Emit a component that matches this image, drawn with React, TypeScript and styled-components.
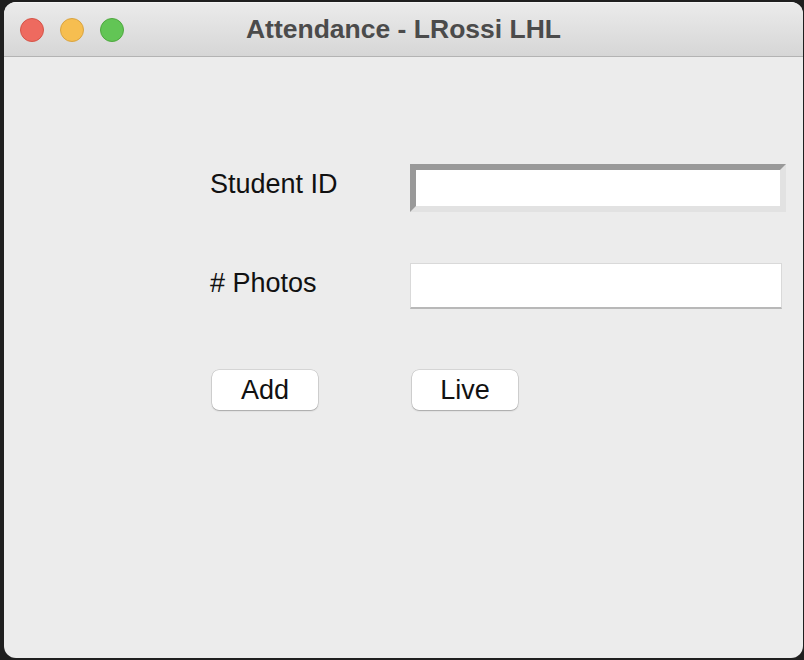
import React from "react";
import styled, { createGlobalStyle } from "styled-components";

const Global = createGlobalStyle`
  html, body {
    margin: 0;
    padding: 0;
    background: #1f1f1f;
    height: 660px;
    overflow: hidden;
  }
  #root {
    padding: 2px 1px 0 4px;
  }
`;

const Window = styled.div`
  width: 799px;
  height: 656px;
  border-radius: 12px;
  background: #ececec;
  overflow: hidden;
  display: flex;
  flex-direction: column;
  font-family: "Liberation Sans", Arial, sans-serif;
`;

const TitleBar = styled.div`
  height: 55px;
  flex: none;
  position: relative;
  display: flex;
  align-items: center;
  justify-content: center;
  background: linear-gradient(#ebebeb, #d6d6d6);
  border-top: 1px solid #f4f4f4;
  border-bottom: 1px solid #b3b3b3;
  box-sizing: border-box;
`;

const Lights = styled.div`
  position: absolute;
  left: 16px;
  top: 15px;
  display: flex;
  gap: 16px;
`;

const Light = styled.span<{ $fill: string; $edge: string }>`
  width: 24px;
  height: 24px;
  border-radius: 50%;
  box-sizing: border-box;
  background: ${(p) => p.$fill};
  border: 1px solid ${(p) => p.$edge};
`;

const Title = styled.div`
  font-weight: bold;
  font-size: 26.5px;
  color: #4b4b4b;
`;

const Content = styled.div`
  flex: 1;
  padding: 107px 0 0 206px;
  display: grid;
  grid-template-columns: 200px 376px;
  grid-template-rows: 48px 46px 40px;
  row-gap: 51px;
  align-content: start;
  align-items: center;
`;

const Label = styled.div<{ $lift: number }>`
  font-size: 27px;
  color: #111;
  margin-top: ${(p) => -p.$lift}px;
`;

const FocusEntry = styled.div`
  width: 376px;
  height: 48px;
  box-sizing: border-box;
  background: #fff;
  border: 6px solid;
  border-color: #999999 #e2e2e2 #e2e2e2 #999999;
`;

const Entry = styled.div`
  width: 372px;
  height: 46px;
  box-sizing: border-box;
  background: #fff;
  border: 1px solid #d9d9d9;
  border-bottom: 2px solid #b8b8b8;
`;

const ButtonRow = styled.div`
  display: contents;
`;

const Button = styled.div`
  width: 106px;
  height: 40px;
  margin-left: 2px;
  margin-top: 20px;
  box-sizing: border-box;
  background: #fff;
  border-radius: 7px;
  box-shadow: 0 0 0 0.5px rgba(0, 0, 0, 0.18), 0 1px 1.5px rgba(0, 0, 0, 0.22);
  font-size: 27px;
  color: #111;
  display: flex;
  align-items: center;
  justify-content: center;
`;

export default function App() {
  return (
    <>
      <Global />
      <Window>
        <TitleBar>
          <Lights>
            <Light $fill="#ee6a5f" $edge="#d55448" />
            <Light $fill="#f6be50" $edge="#d9a441" />
            <Light $fill="#62c555" $edge="#4fa83f" />
          </Lights>
          <Title>Attendance - LRossi LHL</Title>
        </TitleBar>
        <Content>
          <Label $lift={8}>Student ID</Label>
          <FocusEntry />
          <Label $lift={5}># Photos</Label>
          <Entry />
          <ButtonRow>
            <Button>Add</Button>
            <Button>Live</Button>
          </ButtonRow>
        </Content>
      </Window>
    </>
  );
}
